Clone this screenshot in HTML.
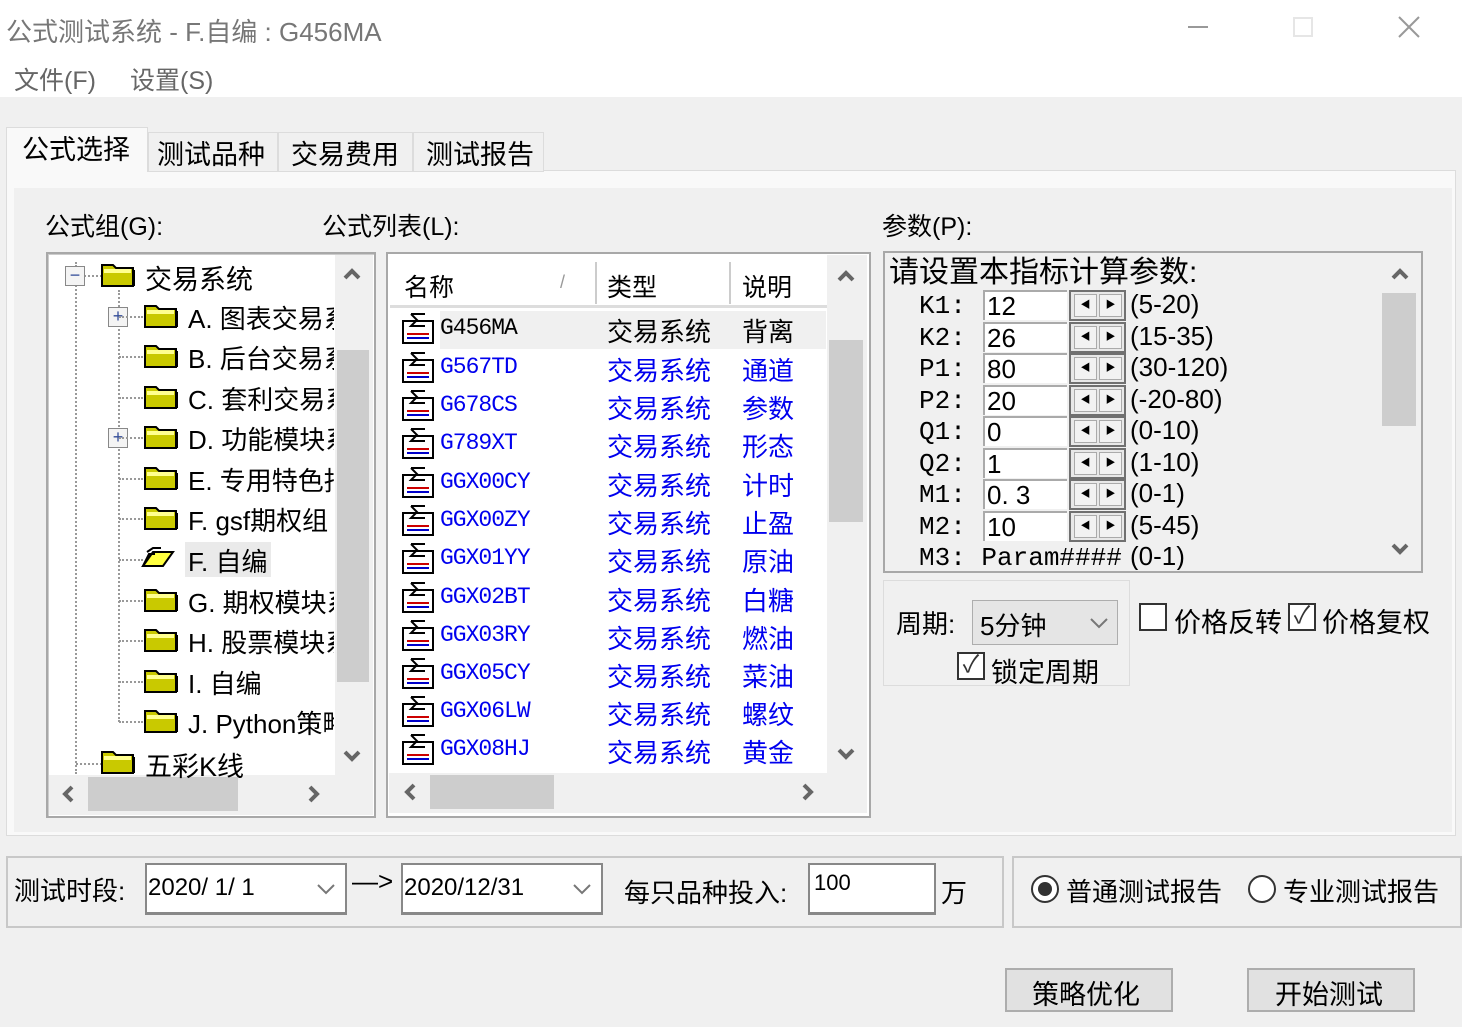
<!DOCTYPE html>
<html><head><meta charset="utf-8"><style>
*{margin:0;padding:0;box-sizing:border-box}
body{width:1462px;height:1027px;background:#f0f0f0;position:relative;overflow:hidden;font-family:"Liberation Sans","Noto Sans CJK SC",sans-serif;color:#000}
.a{position:absolute;white-space:nowrap}
.cj{font-family:"Liberation Sans","Noto Sans CJK SC",sans-serif}
.sm{font-family:"Liberation Mono","Noto Sans CJK SC",monospace}
.t{font-size:25px;line-height:30px}
.dv{border-left:2px dotted #999}
.dh{border-top:2px dotted #999}
.pb{position:absolute;width:20px;height:20px;border:1px solid #888;background:#f4f4f4;font-size:18px;line-height:16px;text-align:center;color:#334c99}
.sb{position:absolute;background:#f0f0f0}
.th{position:absolute;background:#cdcdcd}
.ar{position:absolute}
.pr{position:absolute;font-size:26px;line-height:30px;font-family:"Liberation Mono","Noto Sans CJK SC",monospace}
.in{position:absolute;left:983px;width:84px;height:30px;background:#fff;border-top:2px solid #aaa;border-left:2px solid #aaa}
.sp{position:absolute;left:1069px;width:57px;height:31px;border:2px solid #707070;background:#e8e8e8}
.sp i{position:absolute;top:2px;width:23px;height:23px;border:1px solid #aaa;background:#f2f2f2;font-style:normal;font-size:10px;line-height:22px;text-align:center}
.cb{position:absolute;width:28px;height:28px;border:2px solid #333;background:#fff;font-size:24px;line-height:22px;text-align:center;color:#333}
</style></head><body>
<div class="a" style="left:0;top:0;width:1462px;height:97px;background:#fff"></div>
<div class="a cj" style="left:6px;top:12px;font-size:26px;color:#777">公式测试系统 - F.自编 : G456MA</div>
<div class="a" style="left:1188px;top:26px;width:20px;height:2px;background:#999"></div>
<div class="a" style="left:1293px;top:17px;width:20px;height:20px;border:2px solid #e6e6e6"></div>
<svg class="a" style="left:1398px;top:16px" width="22" height="22"><path d="M1 1L21 21M21 1L1 21" stroke="#999" stroke-width="2"/></svg>
<div class="a cj" style="left:14px;top:61px;font-size:25px;color:#666">文件(F)</div>
<div class="a cj" style="left:130px;top:61px;font-size:25px;color:#666">设置(S)</div>

<div class="a" style="left:6px;top:170px;width:1450px;height:666px;background:#f9f9f9;border:1px solid #dcdcdc"></div>
<div class="a" style="left:14px;top:188px;width:1438px;height:644px;background:#f0f0f0"></div>
<div class="a" style="left:148px;top:132px;width:130px;height:40px;border:1px solid #dcdcdc;background:#f0f0f0"></div>
<div class="a" style="left:278px;top:132px;width:135px;height:40px;border:1px solid #dcdcdc;background:#f0f0f0"></div>
<div class="a" style="left:413px;top:132px;width:131px;height:40px;border:1px solid #dcdcdc;background:#f0f0f0"></div>
<div class="a" style="left:6px;top:127px;width:142px;height:45px;border:1px solid #dcdcdc;border-bottom:none;background:#f9f9f9"></div>
<div class="a cj t" style="left:22px;top:135px;font-size:27px">公式选择</div>
<div class="a cj t" style="left:157px;top:140px;font-size:27px">测试品种</div>
<div class="a cj t" style="left:291px;top:140px;font-size:27px">交易费用</div>
<div class="a cj t" style="left:426px;top:140px;font-size:27px">测试报告</div>

<div class="a cj" style="left:45px;top:207px;font-size:25px">公式组(G):</div>
<div class="a cj" style="left:322px;top:207px;font-size:25px">公式列表(L):</div>
<div class="a cj" style="left:882px;top:207px;font-size:25px">参数(P):</div>

<!-- tree -->
<div class="a" style="left:46px;top:252px;width:330px;height:566px;background:#fff;border:2px solid #a8a8a8;box-shadow:inset 1px 1px 0 #ccc"></div>
<div class="sb" style="left:335px;top:255px;width:38px;height:520px"></div>
<div class="th" style="left:337px;top:350px;width:32px;height:332px"></div>
<svg class="ar" style="left:343px;top:268px" width="18" height="12"><path d="M2 10L9 3L16 10" fill="none" stroke="#666" stroke-width="4"/></svg>
<svg class="ar" style="left:343px;top:750px" width="18" height="12"><path d="M2 2L9 9L16 2" fill="none" stroke="#666" stroke-width="4"/></svg>
<div class="sb" style="left:49px;top:775px;width:324px;height:40px"></div>
<div class="th" style="left:88px;top:777px;width:150px;height:34px"></div>
<svg class="ar" style="left:62px;top:785px" width="12" height="18"><path d="M10 2L3 9L10 16" fill="none" stroke="#666" stroke-width="4"/></svg>
<svg class="ar" style="left:308px;top:785px" width="12" height="18"><path d="M2 2L9 9L2 16" fill="none" stroke="#666" stroke-width="4"/></svg>
<div class="a dv" style="left:75px;top:262px;height:512px"></div>
<div class="a dv" style="left:118px;top:290px;height:432px"></div>
<div class="a dh" style="left:76px;top:275px;width:26px"></div>
<div class="a dh" style="left:76px;top:763px;width:26px"></div>
<div class="pb" style="left:65px;top:266px">−</div>
<div class="pb" style="left:108px;top:307px">+</div>
<div class="pb" style="left:108px;top:428px">+</div>
<div id="tree"></div>
<div class="a" style="left:185px;top:542px;width:86px;height:35px;background:#eaeaea"></div>

<!-- list -->
<div class="a" style="left:386px;top:252px;width:485px;height:566px;background:#fff;border:2px solid #a8a8a8"></div>
<div class="a" style="left:390px;top:305px;width:437px;height:3px;background:#ddd"></div>
<div class="a" style="left:595px;top:262px;width:2px;height:42px;background:#ccc"></div>
<div class="a" style="left:729px;top:262px;width:2px;height:42px;background:#ccc"></div>
<div class="a cj" style="left:404px;top:268px;font-size:25px">名称</div>
<div class="a" style="left:560px;top:272px;font-size:18px;color:#999">/</div>
<div class="a cj" style="left:607px;top:268px;font-size:25px">类型</div>
<div class="a cj" style="left:742px;top:268px;font-size:25px">说明</div>
<div class="a" style="left:440px;top:311px;width:386px;height:38px;background:#f0f0f0"></div>
<div class="sb" style="left:827px;top:255px;width:40px;height:520px"></div>
<div class="th" style="left:829px;top:340px;width:34px;height:182px"></div>
<svg class="ar" style="left:837px;top:270px" width="18" height="12"><path d="M2 10L9 3L16 10" fill="none" stroke="#666" stroke-width="4"/></svg>
<svg class="ar" style="left:837px;top:748px" width="18" height="12"><path d="M2 2L9 9L16 2" fill="none" stroke="#666" stroke-width="4"/></svg>
<div class="sb" style="left:389px;top:773px;width:478px;height:40px"></div>
<div class="th" style="left:430px;top:775px;width:124px;height:34px"></div>
<svg class="ar" style="left:404px;top:783px" width="12" height="18"><path d="M10 2L3 9L10 16" fill="none" stroke="#666" stroke-width="4"/></svg>
<svg class="ar" style="left:802px;top:783px" width="12" height="18"><path d="M2 2L9 9L2 16" fill="none" stroke="#666" stroke-width="4"/></svg>
<div id="list"></div>

<!-- params -->
<div class="a" style="left:883px;top:251px;width:540px;height:322px;background:#f0f0f0;border:2px solid #a8a8a8"></div>
<div class="sb" style="left:1380px;top:254px;width:40px;height:316px;background:#f0f0f0"></div>
<div class="th" style="left:1382px;top:293px;width:34px;height:133px"></div>
<svg class="ar" style="left:1391px;top:268px" width="18" height="12"><path d="M2 10L9 3L16 10" fill="none" stroke="#666" stroke-width="4"/></svg>
<svg class="ar" style="left:1391px;top:543px" width="18" height="12"><path d="M2 2L9 9L16 2" fill="none" stroke="#666" stroke-width="4"/></svg>
<div class="a cj" style="left:889px;top:255px;font-size:30px;line-height:36px">请设置本指标计算参数:</div>
<div style="position:absolute;left:0;top:0;width:1380px;height:570px;overflow:hidden" id="params"></div>

<!-- period -->
<div class="a" style="left:883px;top:580px;width:247px;height:106px;border:1px solid #dcdcdc"></div>
<div class="a cj" style="left:896px;top:604px;font-size:26px">周期:</div>
<div class="a" style="left:972px;top:600px;width:146px;height:45px;background:#e5e5e5;border:1px solid #adadad"></div>
<div class="a cj" style="left:980px;top:606px;font-size:26px">5分钟</div>
<svg class="a" style="left:1089px;top:617px" width="20" height="12"><path d="M2 2L10 10L18 2" fill="none" stroke="#777" stroke-width="2"/></svg>
<div class="cb" style="left:957px;top:652px">✓</div>
<div class="a cj" style="left:991px;top:651px;font-size:27px">锁定周期</div>
<div class="cb" style="left:1139px;top:603px"></div>
<div class="a cj" style="left:1174px;top:601px;font-size:27px">价格反转</div>
<div class="cb" style="left:1288px;top:603px">✓</div>
<div class="a cj" style="left:1322px;top:601px;font-size:27px">价格复权</div>

<!-- bottom -->
<div class="a" style="left:6px;top:856px;width:998px;height:72px;border:2px solid #c8c8c8"></div>
<div class="a" style="left:1012px;top:856px;width:450px;height:72px;border:2px solid #c8c8c8"></div>
<div class="a cj" style="left:14px;top:871px;font-size:26px">测试时段:</div>
<div class="a" style="left:145px;top:863px;width:202px;height:52px;background:#fff;border:2px solid #888;border-bottom-width:3px"></div>
<div class="a" style="left:148px;top:874px;font-size:24px">2020/ 1/ 1</div>
<svg class="a" style="left:316px;top:883px" width="20" height="12"><path d="M2 2L10 10L18 2" fill="none" stroke="#777" stroke-width="2"/></svg>
<div class="a" style="left:352px;top:866px;font-size:26px">—&gt;</div>
<div class="a" style="left:401px;top:863px;width:202px;height:52px;background:#fff;border:2px solid #888;border-bottom-width:3px"></div>
<div class="a" style="left:404px;top:874px;font-size:24px">2020/12/31</div>
<svg class="a" style="left:572px;top:883px" width="20" height="12"><path d="M2 2L10 10L18 2" fill="none" stroke="#777" stroke-width="2"/></svg>
<div class="a cj" style="left:624px;top:873px;font-size:26px">每只品种投入:</div>
<div class="a" style="left:808px;top:863px;width:128px;height:52px;background:#fff;border:2px solid #888;border-bottom-width:3px"></div>
<div class="a" style="left:814px;top:870px;font-size:22px">100</div>
<div class="a cj" style="left:941px;top:873px;font-size:26px">万</div>
<div class="a" style="left:1031px;top:875px;width:28px;height:28px;border-radius:50%;border:2px solid #333;background:#fff"></div>
<div class="a" style="left:1038px;top:882px;width:14px;height:14px;border-radius:50%;background:#333"></div>
<div class="a cj" style="left:1066px;top:872px;font-size:26px">普通测试报告</div>
<div class="a" style="left:1248px;top:875px;width:28px;height:28px;border-radius:50%;border:2px solid #333;background:#fff"></div>
<div class="a cj" style="left:1283px;top:872px;font-size:26px">专业测试报告</div>
<div class="a" style="left:1005px;top:968px;width:168px;height:44px;background:#e1e1e1;border:2px solid #adadad"></div>
<div class="a cj" style="left:1032px;top:973px;font-size:27px">策略优化</div>
<div class="a" style="left:1247px;top:968px;width:168px;height:44px;background:#e1e1e1;border:2px solid #adadad"></div>
<div class="a cj" style="left:1275px;top:973px;font-size:27px">开始测试</div>

<script>
var fold='<svg width="36" height="28" viewBox="0 0 36 28"><path d="M2 5h11l3 3h17v18H2z" fill="#c9c900" stroke="#000" stroke-width="2"/><rect x="4" y="9" width="27" height="4" fill="#ffff90"/><rect x="33" y="10" width="2" height="16" fill="#000"/></svg>';
var open='<svg width="40" height="30" viewBox="0 0 40 30"><path d="M4 22l10-14h20l-10 14z" fill="#ffff40" stroke="#000" stroke-width="2"/><path d="M4 22l6-12h6" fill="none" stroke="#000" stroke-width="2"/><path d="M8 8l6-4h8" fill="none" stroke="#000" stroke-width="2"/></svg>';
var items=[[0,'交易系统',275],[1,'A. 图表交易系',316],[1,'B. 后台交易系',356],[1,'C. 套利交易系',397],[1,'D. 功能模块系',437],[1,'E. 专用特色指',478],[1,'F. gsf期权组',518],[1,'F. 自编',559],[1,'G. 期权模块系',600],[1,'H. 股票模块系',640],[1,'I. 自编',681],[1,'J. Python策略',721],[0,'五彩K线',762]];
var h='';
items.forEach(function(it,i){
 var lv=it[0],y=it[2];
 if(lv==0){h+='<div class="a" style="left:100px;top:'+(y-15)+'px">'+fold+'</div><div class="a cj" style="left:145px;top:'+(y-17)+'px;font-size:27px;width:188px;overflow:hidden">'+it[1]+'</div>';}
 else{h+='<div class="a dh" style="left:119px;top:'+y+'px;width:24px"></div>';
 h+='<div class="a" style="left:'+(i==7?139:143)+'px;top:'+(y-15)+'px">'+(i==7?open:fold)+'</div><div class="a cj" style="left:188px;top:'+(y-17)+'px;font-size:26px;width:146px;overflow:hidden;z-index:2">'+it[1]+'</div>';}
});
document.getElementById('tree').innerHTML=h;
var icon='<svg width="34" height="34" viewBox="0 0 34 34"><rect x="2" y="10" width="30" height="22" fill="#fff" stroke="#000" stroke-width="2"/><path d="M10 3h14M10 3l6 6-6 6h14" fill="none" stroke="#000" stroke-width="2"/><rect x="6" y="22" width="22" height="2" fill="#c00"/><rect x="6" y="26" width="22" height="2" fill="#00c"/></svg>';
var L=[['G456MA','背离',329],['G567TD','通道',368],['G678CS','参数',406],['G789XT','形态',444],['GGX00CY','计时',483],['GGX00ZY','止盈',521],['GGX01YY','原油',559],['GGX02BT','白糖',598],['GGX03RY','燃油',636],['GGX05CY','菜油',674],['GGX06LW','螺纹',712],['GGX08HJ','黄金',750]];
h='';
L.forEach(function(r,i){var c=i==0?'#000':'#0000ee';var y=r[2];
h+='<div class="a" style="left:401px;top:'+(y-18)+'px">'+icon+'</div>';
h+='<div class="a sm" style="left:440px;top:'+(y-14)+'px;font-size:23px;color:'+c+';letter-spacing:-1px">'+r[0]+'</div>';
h+='<div class="a cj" style="left:607px;top:'+(y-17)+'px;font-size:26px;color:'+c+'">交易系统</div>';
h+='<div class="a cj" style="left:742px;top:'+(y-17)+'px;font-size:26px;color:'+c+'">'+r[1]+'</div>';});
document.getElementById('list').innerHTML=h;
var P=[['K1','12','(5-20)'],['K2','26','(15-35)'],['P1','80','(30-120)'],['P2','20','(-20-80)'],['Q1','0','(0-10)'],['Q2','1','(1-10)'],['M1','0. 3','(0-1)'],['M2','10','(5-45)']];
h='';
P.forEach(function(p,i){var y=290+i*31.5;
h+='<div class="pr" style="left:919px;top:'+(y+1)+'px">'+p[0]+':</div>';
h+='<div class="in" style="top:'+y+'px"></div><div class="pr" style="left:987px;top:'+(y+1)+'px;font-family:\'Liberation Sans\',sans-serif">'+p[1]+'</div>';
h+='<div class="sp" style="top:'+y+'px"><i style="left:3px">◀</i><i style="left:28px">▶</i></div>';
h+='<div class="pr" style="left:1130px;top:'+(y-1)+'px;font-family:\'Liberation Sans\',sans-serif">'+p[2]+'</div>';});
h+='<div class="pr" style="left:919px;top:543px">M3: Param####</div><div class="pr" style="left:1130px;top:541px;font-family:\'Liberation Sans\',sans-serif">(0-1)</div>';
document.getElementById('params').innerHTML=h;
</script>
</body></html>
